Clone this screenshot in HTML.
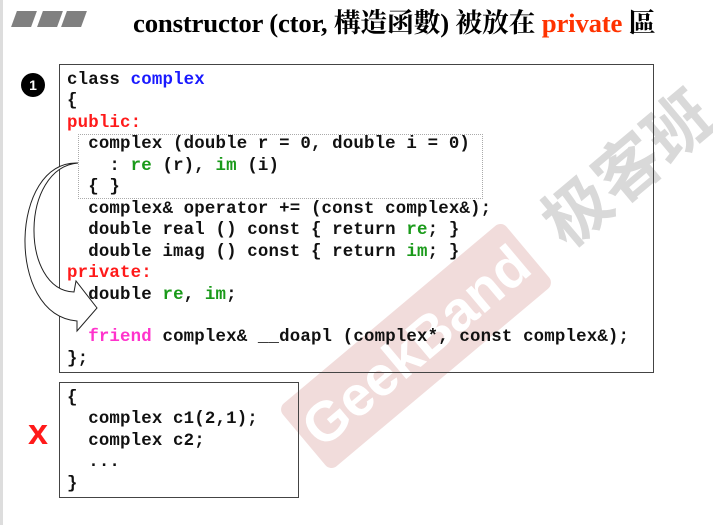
<!DOCTYPE html>
<html><head><meta charset="utf-8"><style>
body{margin:0;width:713px;height:525px;background:#fff;position:relative;overflow:hidden;font-family:"Liberation Sans",sans-serif}
.strip{position:absolute;left:0;top:0;width:3px;height:525px;background:#ddd}
.par{position:absolute;top:11px;width:20px;height:16px;background:#808080;transform:skewX(-20deg)}
.title{position:absolute;left:133px;top:1px;font-family:"Liberation Serif","Noto Serif CJK SC",serif;font-weight:bold;font-size:26.8px;color:#000;white-space:nowrap;letter-spacing:-0.2px}
.box{position:absolute;border:1px solid #444;background:transparent}
pre{margin:0;font-family:"Liberation Mono",monospace;font-weight:bold;font-size:17.4px;letter-spacing:0.17px;line-height:21.45px;color:#111;position:absolute}
.b{color:#1a1aff}.r{color:#ff1a1a}.g{color:#1a9a1a}.m{color:#ff33cc}
</style></head><body>
<div class="strip"></div>
<div class="par" style="left:14px"></div><div class="par" style="left:40px"></div><div class="par" style="left:64px"></div>
<div class="title">constructor (ctor, 構造函數) 被放在 <span style="color:#ff3300">private</span> 區</div>
<div style="position:absolute;left:21px;top:73px;width:24px;height:24px;border-radius:50%;background:#000;color:#fff;font-weight:bold;font-size:14px;text-align:center;line-height:24px">1</div>
<div style="position:absolute;left:270px;top:305px;width:292px;height:82px;background:#f1dcdb;border-radius:8px;transform:rotate(-40deg);color:#fff;font-weight:bold;font-size:56px;text-align:center;line-height:82px;white-space:nowrap">GeekBand</div>
<div style="position:absolute;left:520px;top:130px;width:210px;height:70px;transform:rotate(-40deg);color:#d9d9d9;font-weight:bold;font-size:66px;line-height:70px;text-align:center;font-family:'Noto Sans CJK SC',sans-serif">极客班</div>
<div class="box" style="left:59px;top:64px;width:593px;height:307px"></div>
<div style="position:absolute;left:78px;top:134px;width:403px;height:63px;border:1px dotted #aaa"></div>
<pre style="left:67px;top:70px">class <span class="b">complex</span>
{
<span class="r">public:</span>
  complex (double r = 0, double i = 0)
    : <span class="g">re</span> (r), <span class="g">im</span> (i)
  { }
  complex&amp; operator += (const complex&amp;);
  double real () const { return <span class="g">re</span>; }
  double imag () const { return <span class="g">im</span>; }
<span class="r">private:</span>
  double <span class="g">re</span>, <span class="g">im</span>;

  <span class="m">friend</span> complex&amp; __doapl (complex*, const complex&amp;);
};</pre>
<svg style="position:absolute;left:0;top:0" width="713" height="525">
<path d="M78,163 C20,168 20,290 74,292 L76,281 L97,308 L77,331 L77,321 C5,315 10,160 78,163" fill="#fff" stroke="#222" stroke-width="1"/>
</svg>
<div class="box" style="left:59px;top:382px;width:238px;height:114px"></div>
<pre style="left:67px;top:388px">{
  complex c1(2,1);
  complex c2;
  ...
}</pre>
<div style="position:absolute;left:28px;top:414px;color:#ff1a1a;font-weight:900;font-size:36px;line-height:36px">x</div>
</body></html>
